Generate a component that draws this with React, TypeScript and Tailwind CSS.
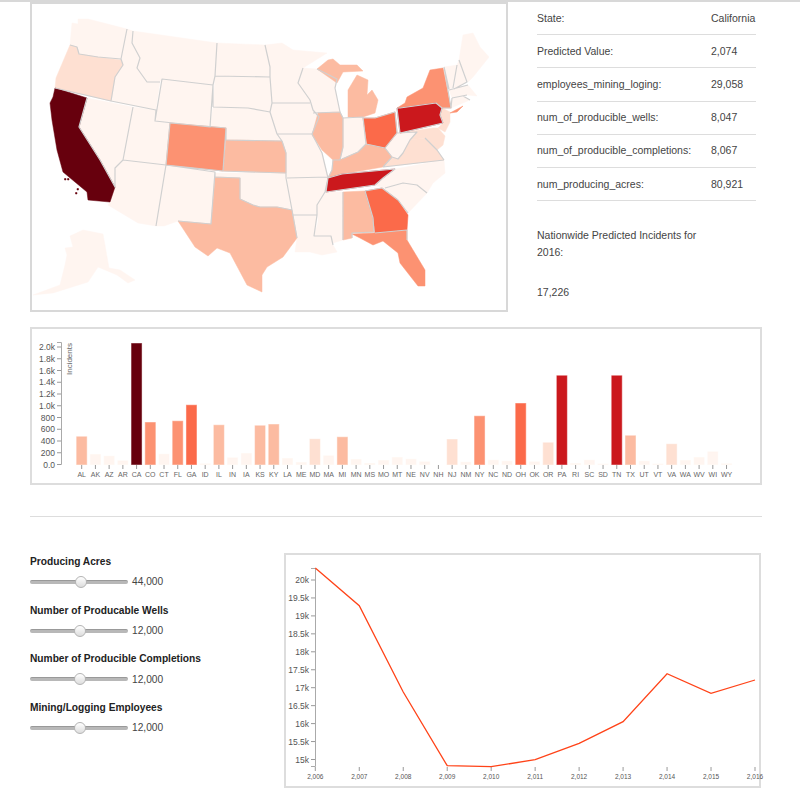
const L = "#fff5f0", A = "#fee0d2", B = "#fcbba1", C = "#fc9272", D = "#fb6a4a", E = "#cb181d", F = "#67000d";

const states: [string, string][] = [
  ["72,23 78,24 78,19 88,19 127,29 121,59 98,57 79,54 77,47 70,45", L], // WA
  ["127,29 133,31 132,43 140,58 137,68 147,82 160,82 156,110 111,101 115,77 123,65 121,59", L], // ID
  ["133,31 217,43 215,76 213,85 162,79 160,82 147,82 137,68 140,58 132,43", L], // MT
  ["162,79 213,85 210,127 155,121", L], // WY
  ["87,98 133,107 123,160 115,168 115,187 100,160 79,127", L], // NV
  ["133,107 156,110 155,121 170,123 166,165 123,160", L], // UT
  ["123,160 166,165 156,226 138,223 108,205 110,202 115,187 115,168", L], // AZ
  ["166,165 215,172 211,224 178,221 164,226 156,226", L], // NM
  ["215,173 286,173 292,210 277,207 260,207 253,205 240,199 240,178 215,177", L], // OK
  ["217,43 265,45 270,67 270,77 215,76", L], // ND
  ["215,76 270,77 272,103 270,112 248,108 213,107", L], // SD
  ["213,107 248,108 270,112 277,134 282,141 226,140 226,128 210,127", L], // NE
  ["265,45 282,43 293,50 327,53 303,68 298,83 310,100 310,103 272,103 270,77 270,67", L], // MN
  ["272,103 310,103 313,110 319,117 312,134 277,134 270,112", L], // IA
  ["277,134 312,134 322,153 328,178 286,178 286,153 282,141", L], // MO
  ["287,178 328,177 325,192 317,205 317,215 292,215 292,210", L], // AR
  ["292,215 317,215 314,236 331,236 333,245 337,252 322,255 310,252 295,252 297,238", L], // LA
  ["325,192 343,192 343,240 333,243 331,236 314,236 318,222 317,205", L], // MS
  ["303,68 317,69 337,79 335,88 340,112 313,113 310,100 298,83", L], // WI
  ["343,118 363,117 366,144 358,152 342,159", L], // IN
  ["385,148 397,133 400,133 417,132 410,140 403,153 398,159 392,157", L], // WV
  ["444,160 445,173 433,183 427,193 417,185 403,183 385,188 375,185 383,178 395,169", L], // NC
  ["385,188 403,183 417,185 427,193 408,213 398,200 382,189", L], // SC
  ["444,67 457,65 453,88 449,89", L], // VT
  ["459,60 467,82 454,89 457,65", L], // NH
  ["463,35 473,33 480,47 489,57 473,77 468,82 459,60", L], // ME
  ["449,90 468,85 477,96 467,95 452,98", L], // MA
  ["452,98 463,96 470,100 451,108", L], // CT RI
  ["70,236 83,230 103,234 109,268 120,270 135,280 128,283 117,275 98,267 88,282 53,293 33,295 60,285 65,265 67,255 65,248 73,247", L], // AK
  ["70,45 77,47 79,54 98,57 121,60 123,65 115,77 111,101 55,88 56,78", A], // OR
  ["442,108 450,112 450,122 445,132 438,128 443,123 440,115", A], // NJ
  ["400,133 433,128 438,128 445,136 443,145 437,150 425,138 410,140 417,132", A], // MD
  ["383,167 392,157 398,159 403,153 410,140 425,138 437,150 444,160", A], // VA
  ["318,113 340,112 343,118 343,147 340,160 333,160 322,150 312,135", B], // IL
  ["348,117 363,117 375,113 378,100 372,90 367,95 368,80 357,75 348,90", B], // MI lower
  ["328,60 317,69 337,83 343,72 363,71 357,65 340,65 333,59", B], // MI upper
  ["226,140 282,141 286,153 286,173 223,171", B], // KS
  ["342,159 358,152 366,144 385,148 392,157 383,167 342,174 328,178 332,170 333,160", B], // KY
  ["215,177 240,178 240,199 253,205 260,207 277,207 292,210 297,238 283,257 267,267 262,275 262,292 247,285 230,253 217,248 208,256 195,247 178,221 211,224", B], // TX
  ["343,192 365,191 373,218 374,232 352,233 352,238 343,240", B], // AL
  ["170,123 226,128 223,171 166,165", C], // CO
  ["405,103 407,97 423,88 430,70 443,68 451,108 442,108 436,103 400,108 397,108", C], // NY
  ["450,113 463,106 457,112", C], // LI
  ["352,234 375,233 407,230 407,240 425,270 425,286 418,286 400,263 398,253 383,241 373,245 360,238", C], // FL
  ["363,118 375,118 395,112 397,133 385,148 367,144", D], // OH
  ["365,191 382,188 398,200 408,215 407,230 375,233 373,218", D], // GA
  ["397,108 400,108 436,103 442,108 440,115 443,123 400,133", E], // PA
  ["342,174 395,169 383,178 375,185 326,192 328,178", E], // TN
  ["55,88 87,98 79,127 100,160 115,187 110,202 88,200 87,192 63,172 57,150 52,120 50,103 53,97", F], // CA
  ["64.5,178.5 66,178.5 66,180 64.5,180", F],
  ["67.5,178.5 69,178.5 69,180 67.5,180", F],
  ["77,188.5 78.5,188.5 78.5,190 77,190", F],
  ["75.5,192.5 77,192.5 77,194 75.5,194", F],
];

const borders =
  "M127,29 L121,59 M133,31 L132,43 L140,58 L137,68 L147,82 L160,82 M121,59 L123,65 L115,77 L111,101 M70,45 L77,47 L79,54 L98,57 L121,59 " +
  "M55,88 L111,101 L156,110 L155,121 L162,79 L213,85 L210,127 L155,121 M217,43 L215,76 L213,85 L213,107 M215,76 L270,77 M213,107 L248,108 L270,112 M265,45 L270,67 L270,77 L272,103 L270,112 L277,134 L282,141 L286,153 L286,178 L292,210 L297,238 M272,103 L310,103 M277,134 L312,134 " +
  "M87,98 L79,127 L100,160 L115,187 L115,168 L123,160 M133,107 L123,160 L166,165 L156,226 M166,165 L215,172 L211,224 L178,221 M170,123 L226,128 L223,171 L166,165 L170,123 M226,128 L226,140 L282,141 M223,171 L286,173 M215,173 L215,177 L240,178 L240,199 L253,205 L260,207 L277,207 L292,210 " +
  "M287,178 L328,177 M292,215 L317,215 L314,236 L331,236 L333,245 M325,192 L317,205 L317,215 M303,68 L298,83 L310,100 L313,110 L319,117 L312,134 L322,153 L328,178 L325,192 M317,69 L337,79 L335,88 L340,112 L313,113 " +
  "M340,112 L343,118 L343,147 L340,160 L333,160 L332,170 L328,178 M343,118 L363,117 L366,144 L358,152 L342,159 M363,118 L375,118 L395,112 L397,133 L385,148 L366,144 M397,108 L400,133 L443,123 M397,108 L400,108 L436,103 L442,108 L440,115 L443,123 M442,108 L451,108 L444,67 M444,67 L449,89 M457,65 L453,88 M459,60 L467,82 L454,89 M449,90 L468,85 M452,98 L467,95 M452,98 L451,108 M463,96 L470,100 " +
  "M385,148 L392,157 L383,167 M397,133 L417,132 L410,140 L403,153 L398,159 L392,157 M425,138 L437,150 L444,160 M383,167 L444,160 M342,174 L395,169 L383,178 L375,185 L326,192 L328,178 L342,174 M343,192 L343,240 M365,191 L373,218 L374,232 L352,233 L352,238 M365,191 L382,188 L398,200 L408,213 M385,188 L403,183 L417,185 L427,193 M375,233 L407,230 L407,240";

const bars: [string, number, string][] = [
  ["AL", 27.7, B], ["AK", 10, L], ["AZ", 8.3, L], ["AR", 3.7, L], ["CA", 121, F], ["CO", 42, C], ["CT", 10.3, L], ["FL", 43.3, C],
  ["GA", 59.3, D], ["ID", 0.7, L], ["IL", 39.3, B], ["IN", 6.7, L], ["IA", 11, L], ["KS", 38.7, B], ["KY", 40, B], ["LA", 6, L],
  ["ME", 2, L], ["MD", 25.3, A], ["MA", 8.7, L], ["MI", 27.3, B], ["MN", 5, L], ["MS", 1, L], ["MO", 4, L], ["MT", 7, L],
  ["NE", 5.3, L], ["NV", 2.7, L], ["NH", 0, L], ["NJ", 25, A], ["NM", 2.3, L], ["NY", 48.3, C], ["NC", 4.3, L], ["ND", 3.3, L],
  ["OH", 61, D], ["OK", 2.7, L], ["OR", 21.7, A], ["PA", 88.7, E], ["RI", 1, L], ["SC", 4.3, L], ["SD", 0.5, L], ["TN", 88.7, E],
  ["TX", 28.7, B], ["UT", 3.3, L], ["VT", 0.5, L], ["VA", 20.3, A], ["WA", 4, L], ["WV", 7, L], ["WI", 12.7, L], ["WY", 0.7, L],
];

const barTicks = ["0.0", "200", "400", "600", "800", "1.0k", "1.2k", "1.4k", "1.6k", "1.8k", "2.0k"];

const lineY = [569, 606.7, 693, 766.7, 767.7, 760.7, 744.3, 722.7, 674.7, 694.3, 681];
const lineTicks = ["15k", "15.5k", "16k", "16.5k", "17k", "17.5k", "18k", "18.5k", "19k", "19.5k", "20k"];

const rows = [
  ["State:", "California"],
  ["Predicted Value:", "2,074"],
  ["employees_mining_loging:", "29,058"],
  ["num_of_producible_wells:", "8,047"],
  ["num_of_producible_completions:", "8,067"],
  ["num_producing_acres:", "80,921"],
];

const sliders: [string, string, number][] = [
  ["Producing Acres", "44,000", 45],
  ["Number of Producable Wells", "12,000", 44],
  ["Number of Producible Completions", "12,000", 44],
  ["Mining/Logging Employees", "12,000", 44],
];

function Slider({ label, value, thumb }: { label: string; value: string; thumb: number }) {
  return (
    <div className="h-[48.7px] pt-[3px]">
      <div className="text-[10.2px] leading-[12px] font-bold text-[#222]">{label}</div>
      <div className="flex items-center h-[14px] mt-[7px]">
        <div className="relative w-[98px] h-[4px] rounded-full bg-[#b8b8b8] border-t border-[#999]">
          <div
            className="absolute top-[-5px] w-[12px] h-[12px] rounded-full border border-[#b4b4b4] bg-gradient-to-b from-white to-[#dddddd]"
            style={{ left: thumb }}
          />
        </div>
        <span className="ml-[4px] text-[10.2px] text-[#444]">{value}</span>
      </div>
    </div>
  );
}

export default function App() {
  return (
    <div className="w-[800px] h-[801px] bg-white border-t-2 border-[#d8d8d8] font-['Liberation_Sans',Arial,sans-serif] overflow-hidden">
      <div className="flex">
        <div className="ml-[30px] w-[478px] h-[310px] border-2 border-[#d8d8d8] shrink-0">
          <svg width="474" height="306" viewBox="32 4 474 306" className="block">
            {states.map(([p, c], i) => (
              <polygon key={i} points={p} fill={c} stroke={c} strokeWidth="0.5" strokeLinejoin="round" />
            ))}
            <path d={borders} fill="none" stroke="#d0d0d0" strokeWidth="1.2" strokeLinejoin="round" />
          </svg>
        </div>
        <div className="ml-[29px] w-[219px] text-[10.5px] text-[#444]">
          {rows.map(([k, v], i) => (
            <div key={i} className="flex items-center h-[33.2px] pt-[1px] border-b border-[#dddddd]">
              <span className="w-[174px]">{k}</span>
              <span>{v}</span>
            </div>
          ))}
          <div className="mt-[26px] w-[170px] leading-[16.5px]">Nationwide Predicted Incidents for 2016:</div>
          <div className="mt-[24px] leading-[16.5px]">17,226</div>
        </div>
      </div>

      <div className="ml-[30px] mt-[15px] w-[732px] h-[158px] border-2 border-[#dddddd]">
        <svg width="728" height="154" viewBox="32 329 728 154" className="block">
          <path d="M57,342.5 H61.5 V464.5 H57" fill="none" stroke="#aaa" />
          {barTicks.map((t, i) => {
            const y = 464.5 - i * 11.75;
            return (
              <g key={t}>
                <line x1="57" x2="61" y1={y} y2={y} stroke="#999" />
                <text x="55" y={y + 3} textAnchor="end" fontSize="8.5" fill="#555">{t}</text>
              </g>
            );
          })}
          <text transform="translate(72,343) rotate(-90)" textAnchor="end" fontSize="8" fill="#666">Incidents</text>
          {bars.map(([s, h, c], i) => {
            const x = 81.7 + i * 13.72;
            return (
              <g key={s}>
                <line x1={x} x2={x} y1="465" y2="469" stroke="#999" />
                <text x={x} y="477" textAnchor="middle" fontSize="7" fill="#666">{s}</text>
                {h > 0 && (
                  <rect x={x - 5} y={464.5 - h} width="10" height={h} fill={c} stroke={c} strokeOpacity="0.55" strokeWidth="1" />
                )}
              </g>
            );
          })}
        </svg>
      </div>

      <div className="ml-[30px] mt-[31px] w-[732px] border-t border-[#dddddd]" />

      <div className="flex mt-[36px]">
        <div className="ml-[30px] w-[254px]">
          {sliders.map(([l, v, t]) => (
            <Slider key={l} label={l} value={v} thumb={t} />
          ))}
        </div>
        <div className="w-[477px] h-[235px] border-2 border-[#dddddd]">
          <svg width="473" height="231" viewBox="286 556 473 231" className="block overflow-visible">
            <path d="M311,569.5 H315.5 V767.5 H311" fill="none" stroke="#aaa" />
            {lineTicks.map((t, i) => {
              const y = 760.5 - i * 17.95;
              return (
                <g key={t}>
                  <line x1="311" x2="315" y1={y} y2={y} stroke="#999" />
                  <text x="309" y={y + 3} textAnchor="end" fontSize="8.5" fill="#555">{t}</text>
                </g>
              );
            })}
            {lineY.map((_, i) => {
              const x = 315.3 + i * 43.97;
              return (
                <g key={i}>
                  <line x1={x} x2={x} y1="768" y2="772" stroke="#999" />
                  <text x={x} y="779.5" textAnchor="middle" fontSize="6.5" fill="#555">{(2006 + i).toLocaleString("en-US")}</text>
                </g>
              );
            })}
            <polyline
              points={lineY.map((y, i) => `${315.3 + i * 43.97},${y}`).join(" ")}
              fill="none"
              stroke="#ff4318"
              strokeWidth="1.3"
            />
          </svg>
        </div>
      </div>
    </div>
  );
}
